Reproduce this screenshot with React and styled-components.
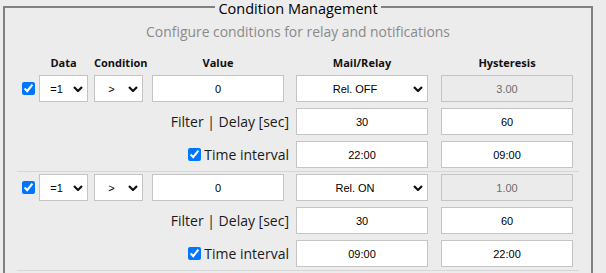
import React from "react";
import styled, { createGlobalStyle } from "styled-components";

const GlobalStyle = createGlobalStyle`
  html, body {
    margin: 0;
    padding: 0;
    background: #ececec;
  }
  body {
    font-family: "Open Sans", "Noto Sans", sans-serif;
    color: #111;
  }
`;

const COLS = "22px 55px 58px 144px 145px 138px";

const Page = styled.div`
  padding: 0 13px 20px 3px;
`;

const Fieldset = styled.fieldset`
  margin: 0;
  padding: 0 12px 12px;
  border: 2px solid #808080;
  min-width: 0;
`;

const Legend = styled.legend`
  margin: 0 auto;
  padding: 3px 3px 0;
  font-size: 14.5px;
  line-height: 11px;
  color: #000;
`;

const Subtitle = styled.div`
  margin: 8px 0 13px;
  text-align: center;
  font-size: 13.9px;
  line-height: 19px;
  color: #8a8a8a;
`;

const Row = styled.div`
  display: grid;
  grid-template-columns: ${COLS};
  align-items: center;
  height: ${(p) => (p.$head ? "18px" : "27px")};
  margin-bottom: ${(p) => (p.$head ? "1px" : "0")};
`;

const HeadCell = styled.div`
  grid-column: ${(p) => p.$col};
  width: ${(p) => p.$w}px;
  text-align: center;
  font-weight: 700;
  font-size: 11px;
  line-height: 18px;
`;

const Block = styled.div`
  display: flex;
  flex-direction: column;
  gap: 6px;
  padding: 2px 0 3px;
  border-bottom: 1px solid #d6d6d6;
`;

const Check = styled.input.attrs({ type: "checkbox" })`
  width: 13px;
  height: 13px;
  margin: 0;
  accent-color: #0075ff;
  justify-self: center;
`;

const Field = styled.input`
  box-sizing: border-box;
  width: ${(p) => p.$w}px;
  height: 27px;
  margin: 0;
  padding: 0 4px;
  border: 1px solid #c4c4c4;
  border-radius: 0;
  background: ${(p) => (p.disabled ? "#ebebeb" : "#fff")};
  color: ${(p) => (p.disabled ? "#6d6d6d" : "#000")};
  font-family: "Liberation Sans", Arial, sans-serif;
  font-size: 11px;
  text-align: center;
  outline: none;
`;

const SelectWrap = styled.div`
  position: relative;
  width: ${(p) => p.$w}px;
  height: 27px;
`;

const Select = styled.select`
  appearance: none;
  box-sizing: border-box;
  width: 100%;
  height: 27px;
  margin: 0;
  padding: 0 14px 0 0;
  border: 1px solid #c4c4c4;
  border-radius: 0;
  background: #fff;
  color: #000;
  font-family: "Liberation Sans", Arial, sans-serif;
  font-size: 11px;
  text-align: center;
  text-align-last: center;
  outline: none;
`;

const Chevron = styled.svg`
  position: absolute;
  right: 5px;
  top: 11px;
  width: 10px;
  height: 6px;
  pointer-events: none;
`;

const LabelCell = styled.label`
  grid-column: 1 / 5;
  justify-self: end;
  padding-right: 7px;
  display: inline-flex;
  align-items: center;
  gap: 3px;
  font-size: 14px;
  line-height: 19px;
  color: #1a1a1a;
`;

function Dropdown({ w, value, options }) {
  return (
    <SelectWrap $w={w}>
      <Select defaultValue={value}>
        {options.map((o) => (
          <option key={o} value={o}>
            {o}
          </option>
        ))}
      </Select>
      <Chevron viewBox="0 0 10 6">
        <path d="M1 1 L5 5 L9 1" fill="none" stroke="#111" strokeWidth="2.2" />
      </Chevron>
    </SelectWrap>
  );
}

const conditions = [
  { relay: "Rel. OFF", hyst: "3.00", from: "22:00", to: "09:00" },
  { relay: "Rel. ON", hyst: "1.00", from: "09:00", to: "22:00" },
];

export default function App() {
  return (
    <>
      <GlobalStyle />
      <Page>
        <Fieldset>
          <Legend>Condition Management</Legend>
          <Subtitle>Configure conditions for relay and notifications</Subtitle>
          <Row $head>
            <HeadCell $col={2} $w={49}>Data</HeadCell>
            <HeadCell $col={3} $w={49}>Condition</HeadCell>
            <HeadCell $col={4} $w={132}>Value</HeadCell>
            <HeadCell $col={5} $w={132}>Mail/Relay</HeadCell>
            <HeadCell $col={6} $w={132}>Hysteresis</HeadCell>
          </Row>
          {conditions.map((c, i) => (
            <Block key={i}>
              <Row>
                <Check defaultChecked />
                <Dropdown w={49} value="=1" options={["=1", "=0"]} />
                <Dropdown w={49} value=">" options={[">", "<", "="]} />
                <Field $w={132} defaultValue="0" />
                <Dropdown w={132} value={c.relay} options={["Rel. OFF", "Rel. ON", "Mail"]} />
                <Field $w={132} defaultValue={c.hyst} disabled />
              </Row>
              <Row>
                <LabelCell>Filter | Delay [sec]</LabelCell>
                <Field $w={132} defaultValue="30" />
                <Field $w={132} defaultValue="60" />
              </Row>
              <Row>
                <LabelCell>
                  <Check defaultChecked />
                  Time interval
                </LabelCell>
                <Field $w={132} defaultValue={c.from} />
                <Field $w={132} defaultValue={c.to} />
              </Row>
            </Block>
          ))}
        </Fieldset>
      </Page>
    </>
  );
}
